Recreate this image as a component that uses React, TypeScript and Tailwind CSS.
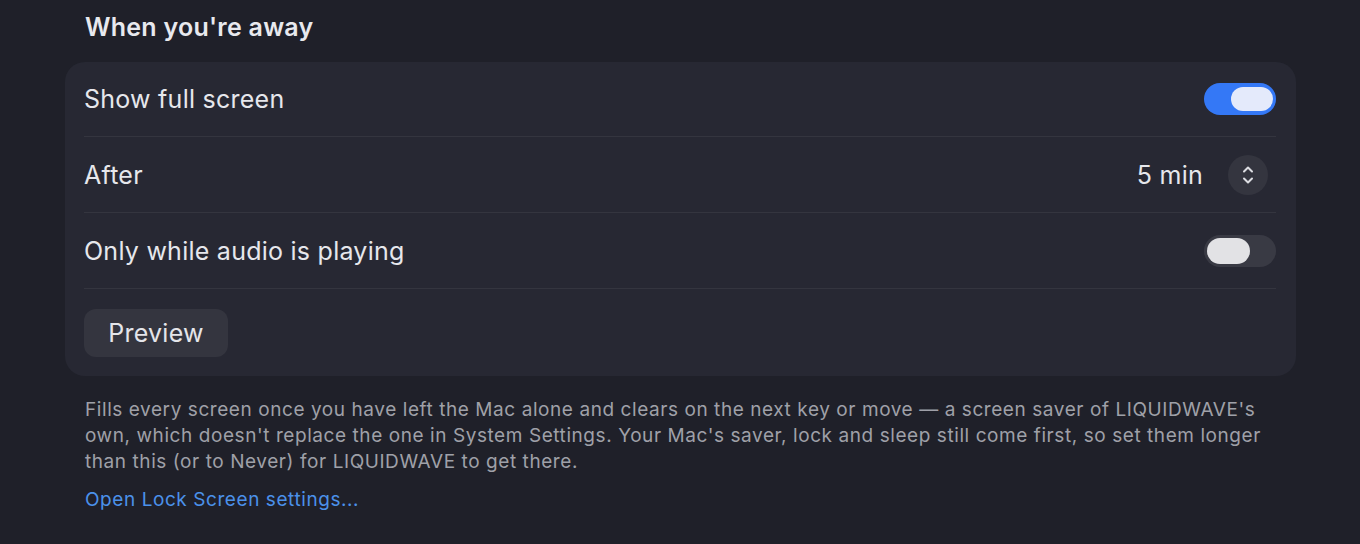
import React from 'react';

function Toggle({ on }: { on: boolean }) {
  return (
    <div
      className={
        on
          ? 'flex h-8 w-[72px] items-center justify-end rounded-full bg-[#3478f6] px-[3px]'
          : 'flex h-8 w-[72px] items-center justify-start rounded-full bg-[#393a44] px-[3px]'
      }
    >
      <div
        className={
          on
            ? 'h-6 w-[42px] rounded-full bg-[#e4eafb]'
            : 'h-[26px] w-[43px] rounded-full bg-[#e2e2e5]'
        }
      />
    </div>
  );
}

function Stepper() {
  return (
    <div className="flex h-10 w-10 items-center justify-center rounded-full bg-[#34353f]">
      <svg width="14" height="22" viewBox="0 0 14 22" fill="none">
        <path d="M3 7.5 L7 3.5 L11 7.5" stroke="#dcdde2" strokeWidth="2" strokeLinecap="round" strokeLinejoin="round" />
        <path d="M3 14.5 L7 18.5 L11 14.5" stroke="#dcdde2" strokeWidth="2" strokeLinecap="round" strokeLinejoin="round" />
      </svg>
    </div>
  );
}

export default function App() {
  return (
    <div
      className="min-h-screen w-full bg-[#1f2029] pl-[65px] pr-[64px] pt-[11px] text-[#e6e7ec]"
      style={{ fontFamily: 'Inter, "Noto Sans", sans-serif' }}
    >
      {/* Section heading */}
      <h2 className="ml-5 text-[25px] font-semibold leading-8 tracking-[0.01em] text-[#e8e9ee]">When you're away</h2>

      {/* Settings card */}
      <div className="mt-[19px] rounded-[20px] bg-[#272833] pl-[19px] pr-5 text-[25px] leading-8 tracking-[0.01em]">
        <div className="flex h-[75px] items-center justify-between border-b border-[#34353f]">
          <span>Show full screen</span>
          <Toggle on />
        </div>
        <div className="flex h-[76px] items-center justify-between border-b border-[#34353f]">
          <span>After</span>
          <div className="flex items-center gap-[25px] pr-2">
            <span>5 min</span>
            <Stepper />
          </div>
        </div>
        <div className="flex h-[76px] items-center justify-between border-b border-[#34353f]">
          <span>Only while audio is playing</span>
          <Toggle on={false} />
        </div>
        <div className="pb-[19px] pt-5">
          <button className="h-12 w-[144px] rounded-xl bg-[#34353f] text-[#e4e5ea]">Preview</button>
        </div>
      </div>

      {/* Footnote */}
      <div className="mt-[21px] pl-5 pr-2 text-[19px] leading-[26px] tracking-[0.03em]">
        <p className="text-[#9fa0a8]">
          Fills every screen once you have left the Mac alone and clears on the next key or move — a screen saver of
          LIQUIDWAVE's own, which doesn't replace the one in System Settings. Your Mac's saver, lock and sleep still
          come first, so set them longer than this (or to Never) for LIQUIDWAVE to get there.
        </p>
        <a className="mt-3 block text-[#4b91ea]">Open Lock Screen settings...</a>
      </div>
    </div>
  );
}
